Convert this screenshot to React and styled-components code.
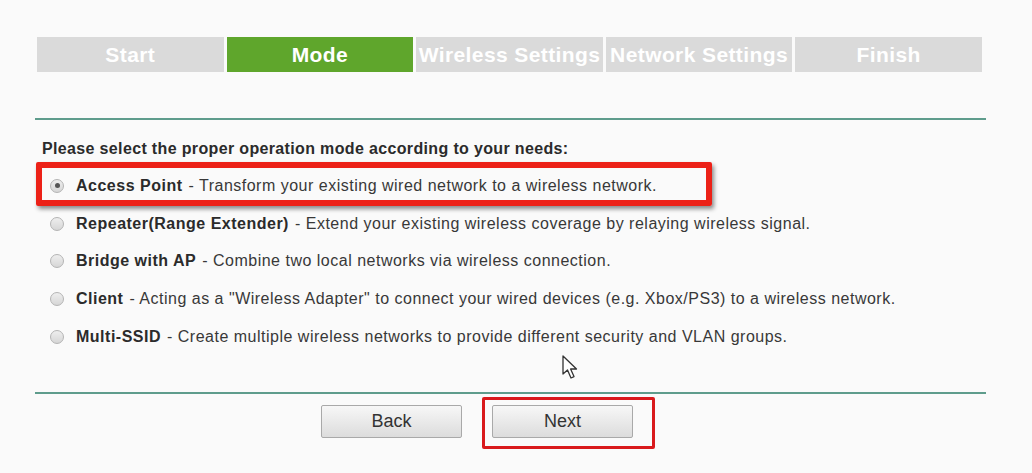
import React from "react";
import styled, { createGlobalStyle } from "styled-components";

const GlobalStyle = createGlobalStyle`
  html, body {
    margin: 0;
    padding: 0;
    background: #fafafa;
    font-family: "Liberation Sans", Arial, sans-serif;
  }
`;

const steps = ["Start", "Mode", "Wireless Settings", "Network Settings", "Finish"];

const modes = [
  { name: "Access Point", desc: "Transform your existing wired network to a wireless network.", checked: true },
  { name: "Repeater(Range Extender)", desc: "Extend your existing wireless coverage by relaying wireless signal." },
  { name: "Bridge with AP", desc: "Combine two local networks via wireless connection." },
  { name: "Client", desc: 'Acting as a "Wireless Adapter" to connect your wired devices (e.g. Xbox/PS3) to a wireless network.' },
  { name: "Multi-SSID", desc: "Create multiple wireless networks to provide different security and VLAN groups." },
];

const Page = styled.div`
  position: relative;
  width: 1032px;
  height: 473px;
  padding: 37px 0 0 35px;
  box-sizing: border-box;
`;

const Steps = styled.div`
  display: flex;
  gap: 3px;
  margin-left: 2px;
  width: 945px;
`;

const Step = styled.div`
  flex: 1;
  height: 35px;
  background: ${(p) => (p.active ? "#5fa62c" : "#dadada")};
  color: #fff;
  font-weight: bold;
  font-size: 21px;
  letter-spacing: 0.4px;
  display: flex;
  align-items: center;
  justify-content: center;
  white-space: nowrap;
  overflow: hidden;
`;

const Rule = styled.div`
  width: 951px;
  height: 2px;
  background: #5e9c8c;
  margin-top: ${(p) => p.top}px;
`;

const Heading = styled.div`
  margin: 20px 0 0 7px;
  font-size: 16px;
  letter-spacing: 0.35px;
  font-weight: bold;
  color: #2b2b2b;
`;

const List = styled.div`
  display: flex;
  flex-direction: column;
  margin-top: 9px;
`;

const Row = styled.div`
  position: relative;
  display: flex;
  align-items: center;
  height: 37.8px;
  padding-left: 15px;
  font-size: 16px;
  letter-spacing: 0.5px;
  color: #383838;
  white-space: nowrap;
`;

const Highlight = styled.div`
  position: absolute;
  left: 1px;
  top: -5px;
  width: 664px;
  height: 32px;
  border: 6px solid #ec2117;
  border-radius: 2px;
  box-shadow: 2px 3px 4px rgba(0, 0, 0, 0.45);
  pointer-events: none;
`;

const Radio = styled.span`
  width: 12px;
  height: 12px;
  border-radius: 50%;
  border: 1px solid #b4b4b4;
  background: linear-gradient(#eeeeee, #d6d6d6);
  margin-right: 12px;
  display: flex;
  align-items: center;
  justify-content: center;
  flex-shrink: 0;
  &::after {
    content: "";
    display: ${(p) => (p.checked ? "block" : "none")};
    width: 5px;
    height: 5px;
    border-radius: 50%;
    background: #555;
  }
`;

const Name = styled.b`
  color: #2b2b2b;
  margin-right: 6px;
`;

const Buttons = styled.div`
  display: flex;
  gap: 30px;
  margin: 11px 0 0 286px;
`;

const ButtonWrap = styled.div`
  position: relative;
`;

const Button = styled.button`
  width: 141px;
  height: 33px;
  border: 1px solid #a9a9a9;
  border-radius: 2px;
  background: linear-gradient(#f7f7f7, #dcdcdc);
  font-family: "Liberation Sans", Arial, sans-serif;
  font-size: 18px;
  color: #333;
`;

const Outline = styled.div`
  position: absolute;
  left: -10px;
  top: -8px;
  width: 167px;
  height: 46px;
  border: 3px solid #d9191c;
  border-radius: 2px;
  pointer-events: none;
`;

const Cursor = styled.svg`
  position: absolute;
  left: 561px;
  top: 354px;
`;

export default function App() {
  return (
    <Page>
      <GlobalStyle />
      <Steps>
        {steps.map((s) => (
          <Step key={s} active={s === "Mode"}>
            {s}
          </Step>
        ))}
      </Steps>
      <Rule top={46} />
      <Heading>Please select the proper operation mode according to your needs:</Heading>
      <List>
        {modes.map((m) => (
          <Row key={m.name}>
            {m.checked && <Highlight />}
            <Radio checked={m.checked} />
            <Name>{m.name}</Name>- {m.desc}
          </Row>
        ))}
      </List>
      <Rule top={36} />
      <Buttons>
        <ButtonWrap>
          <Button>Back</Button>
        </ButtonWrap>
        <ButtonWrap>
          <Outline />
          <Button>Next</Button>
        </ButtonWrap>
      </Buttons>
      <Cursor width="22" height="28" viewBox="0 0 22 28">
        <path
          d="M2 2 L2 20 L6.5 16 L10 24 L13 22.6 L9.6 15 L15.5 15 Z"
          fill="#fff"
          stroke="#333"
          strokeWidth="1.3"
          strokeLinejoin="round"
        />
      </Cursor>
    </Page>
  );
}
